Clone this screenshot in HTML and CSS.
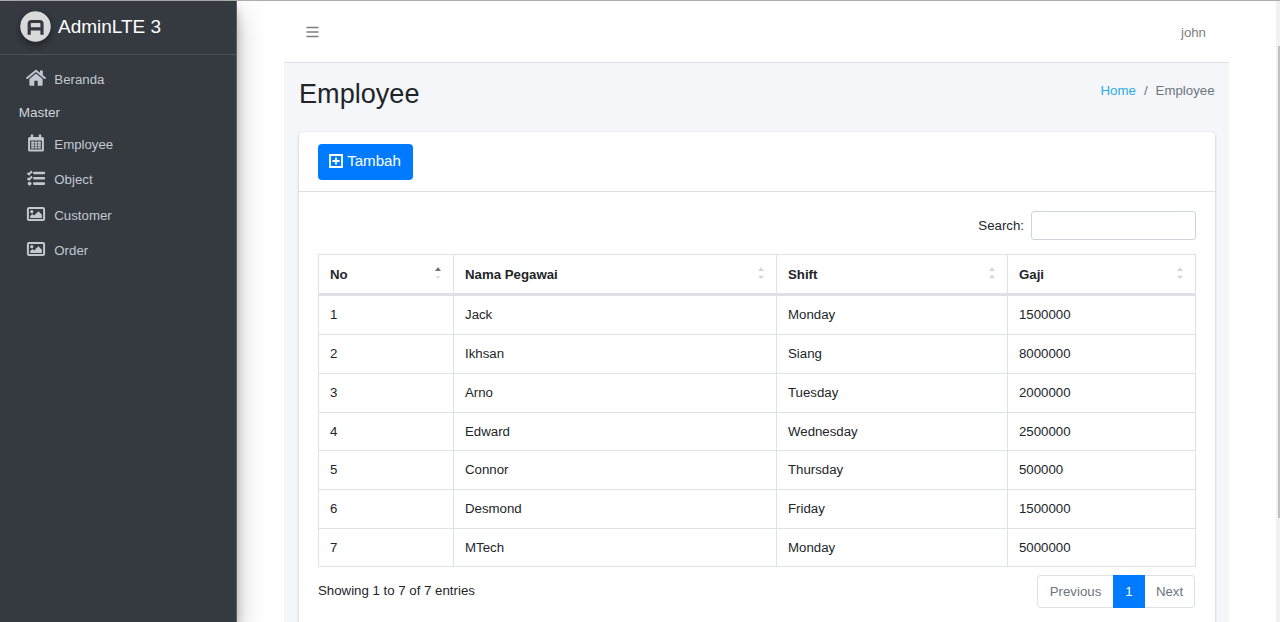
FILE: index.html
```html
<!DOCTYPE html>
<html lang="en">
<head>
<meta charset="utf-8">
<title>AdminLTE 3 | Employee</title>
<link rel="stylesheet" href="styles.css">
</head>
<body>
<div class="app">
  <aside class="sidebar">
    <a class="brand">
      <svg class="brand-logo" viewBox="0 0 31 31"><circle cx="15.500" cy="15.500" r="15.300" fill="#d8d9da"/><path d="M9.200 23.700V12.800Q9.200 10.500 11.500 10.500H19.700Q22 10.500 22 12.800V23.700M9.200 17.800H22" fill="none" stroke="#343a40" stroke-width="3.200"/></svg>
      <span class="brand-text">AdminLTE 3</span>
    </a>
    <nav class="menu">
      <a class="menu-item"><svg class="menu-icon" viewBox="0 0 20 18"><path d="M1.200 9 10 1.800 18.800 9" fill="none" stroke="currentColor" stroke-width="2" stroke-linecap="round"/><path d="M14 1.500h2.800v6L14 5zM10 4.400 16.600 10v6q0 .7-.7.7h-4.200v-4.900H8.300v4.900H4.100q-.7 0-.7-.7v-6z" fill="currentColor"/></svg><span>Beranda</span></a>
      <div class="menu-header">Master</div>
      <a class="menu-item"><svg class="menu-icon raised" viewBox="0 0 20 18"><path fill="currentColor" fill-rule="evenodd" d="M4.800.5h2.400V3h5.600V.5h2.400V3h1.100q1.600 0 1.600 1.600v11.300q0 1.600-1.600 1.600H3.700q-1.600 0-1.600-1.600V4.600Q2.100 3 3.700 3h1.100zM4.100 6.500v9h11.800v-9zM5.200 7.600h2.800v2.100H5.200zm3.400 0h2.800v2.100H8.600zm3.400 0h2.800v2.100H12zM5.200 10.200H8v2H5.200zm3.400 0h2.800v2H8.600zm3.400 0h2.800v2H12zM5.200 12.700H8v1.900H5.200zm3.400 0h2.800v1.900H8.600zm3.400 0h2.800v1.900H12z"/></svg><span>Employee</span></a>
      <a class="menu-item"><svg class="menu-icon raised" viewBox="0 0 20 18"><path d="M1.500 4.100 3 5.400 6 2.300M1.500 9.300 3 10.600 6 7.500" fill="none" stroke="currentColor" stroke-width="2"/><circle cx="3.600" cy="14.600" r="1.900" fill="currentColor"/><path d="M8.300 4h9.600M8.300 9.300h9.600M8.300 14.600h9.600" stroke="currentColor" stroke-width="2.600" stroke-linecap="round"/></svg><span>Object</span></a>
      <a class="menu-item"><svg class="menu-icon" viewBox="0 0 20 18"><rect x="1.900" y="3" width="16.200" height="12" rx="1.200" fill="none" stroke="currentColor" stroke-width="2"/><circle cx="5.800" cy="6.700" r="1.600" fill="currentColor"/><path d="M4.200 13v-1.900l2.200-2.100 1.700 1.600 4.300-4.300 3.500 3.500V13z" fill="currentColor"/></svg><span>Customer</span></a>
      <a class="menu-item"><svg class="menu-icon raised" viewBox="0 0 20 18"><rect x="1.900" y="3" width="16.200" height="12" rx="1.200" fill="none" stroke="currentColor" stroke-width="2"/><circle cx="5.800" cy="6.700" r="1.600" fill="currentColor"/><path d="M4.200 13v-1.900l2.200-2.100 1.700 1.600 4.300-4.300 3.500 3.500V13z" fill="currentColor"/></svg><span>Order</span></a>
    </nav>
  </aside>

  <main class="page">
    <header class="topbar">
      <svg class="toggle" viewBox="0 0 12 12"><path d="M0 1.500h12M0 6h12M0 10.500h12" stroke="#7f7f7f" stroke-width="1.700"/></svg>
      <span class="user">john</span>
    </header>
    <section class="content">
      <div class="content-head">
        <h1 class="title">Employee</h1>
        <div class="crumbs"><a class="crumb-link">Home</a><span>/</span><span>Employee</span></div>
      </div>
      <div class="card">
        <div class="card-header">
          <button class="btn-add"><svg class="btn-icon" viewBox="0 0 14 14"><path d="M1 1h12v12H1zM7 3.400v7.200M3.400 7h7.200" fill="none" stroke="#fff" stroke-width="1.800"/></svg>Tambah</button>
        </div>
        <div class="card-body">
          <label class="search">Search:<input class="search-input" type="text"></label>
          <table class="grid">
            <colgroup><col class="c-no"><col class="c-name"><col class="c-shift"><col class="c-pay"></colgroup>
            <thead>
              <tr>
                <th><div class="th">No<svg class="sort" viewBox="0 0 6 12"><path d="M0 4 3 0l3 4z" fill="#707377"/><path d="M.5 9h5L3 12z" fill="#dddfe1"/></svg></div></th>
                <th><div class="th">Nama Pegawai<svg class="sort" viewBox="0 0 6 12"><path d="M0 4 3 .3 6 4zM0 8.700h6L3 12z" fill="#d3d5d8"/></svg></div></th>
                <th><div class="th">Shift<svg class="sort" viewBox="0 0 6 12"><path d="M0 4 3 .3 6 4zM0 8.700h6L3 12z" fill="#d3d5d8"/></svg></div></th>
                <th><div class="th">Gaji<svg class="sort" viewBox="0 0 6 12"><path d="M0 4 3 .3 6 4zM0 8.700h6L3 12z" fill="#d3d5d8"/></svg></div></th>
              </tr>
            </thead>
            <tbody>
              <tr><td>1</td><td>Jack</td><td>Monday</td><td>1500000</td></tr>
              <tr><td>2</td><td>Ikhsan</td><td>Siang</td><td>8000000</td></tr>
              <tr><td>3</td><td>Arno</td><td>Tuesday</td><td>2000000</td></tr>
              <tr class="short"><td>4</td><td>Edward</td><td>Wednesday</td><td>2500000</td></tr>
              <tr><td>5</td><td>Connor</td><td>Thursday</td><td>500000</td></tr>
              <tr><td>6</td><td>Desmond</td><td>Friday</td><td>1500000</td></tr>
              <tr class="short"><td>7</td><td>MTech</td><td>Monday</td><td>5000000</td></tr>
            </tbody>
          </table>
          <div class="table-foot">
            <span class="info">Showing 1 to 7 of 7 entries</span>
            <div class="pager"><a class="pg prev">Previous</a><a class="pg current">1</a><a class="pg next">Next</a></div>
          </div>
        </div>
      </div>
    </section>
  </main>
  <div class="scrollbar"><div class="scroll-thumb"></div></div>
</div>
</body>
</html>
```
FILE: styles.css
```css
* { box-sizing: border-box; }
body {
  margin: 0;
  height: 622px;
  overflow: hidden;
  background: #fff;
  color: #212529;
  font-family: "Liberation Sans", Arial, sans-serif;
  font-size: 13.25px;
  line-height: 20px;
}
.app {
  display: flex;
  height: 622px;
  border-top: 1px solid #adafb1;
}

/* Sidebar */
.sidebar {
  flex: none;
  width: 237px;
  background: #343a40;
  border-right: 1px solid #5c6166;
  box-shadow: 0 13px 26px rgba(0, 0, 0, .25), 0 9px 9px rgba(0, 0, 0, .22);
  color: #c2c7d0;
}
.brand {
  display: flex;
  align-items: center;
  gap: 7px;
  height: 54px;
  padding: 0 0 3px 20px;
  border-bottom: 1px solid #4b545c;
}
.brand-logo {
  width: 31px;
  height: 31px;
  border-radius: 50%;
  box-shadow: 0 3px 6px rgba(0, 0, 0, .18), 0 3px 6px rgba(0, 0, 0, .23);
}
.brand-text { color: #fff; font-size: 19px; line-height: 28px; padding-top: 2px; }
.menu { padding-top: 7px; }
.menu-item {
  display: flex;
  align-items: center;
  gap: 8.300px;
  height: 35.400px;
  padding-left: 26px;
}
.menu-icon { width: 20px; height: 18px; margin-top: -3px; }
.menu-icon.raised { margin-top: -5px; }
.menu-header { height: 30px; padding: 6px 0 0 18.700px; color: #d0d4db; font-size: 13.500px; }

/* Page */
.page { flex: none; width: 945px; margin-left: 47px; display: flex; flex-direction: column; }
.topbar {
  display: flex;
  justify-content: space-between;
  align-items: center;
  flex: none;
  height: 62px;
  padding: 0 23px 0 22px;
  border-bottom: 1px solid #dee2e6;
}
.toggle { width: 13px; height: 12px; }
.user { color: #808080; padding-top: 2px; }
.content { flex: 1; padding: 0 14px 0 15px; background: #f4f6f9; }
.content-head { display: flex; justify-content: space-between; height: 69px; }
.title { margin: 14px 0 0; font-size: 27.100px; line-height: 34px; font-weight: 400; }
.crumbs { display: flex; gap: 8px; padding: 18px .5px 0 0; color: #6c757d; }
.crumb-link { color: #29abe8; }

.card {
  height: 520px;
  background: #fff;
  border-radius: 4px;
  box-shadow: 0 0 1px rgba(0, 0, 0, .125), 0 1px 3px rgba(0, 0, 0, .2);
}
.card-header {
  height: 60px;
  padding: 12px 19px 0;
  border-bottom: 1px solid #dfdfdf;
}
.btn-add {
  display: flex;
  align-items: center;
  justify-content: center;
  gap: 4px;
  width: 95px;
  height: 36px;
  padding: 0 1px 2px 0;
  border: 0;
  border-radius: 4px;
  background: #007bff;
  color: #fff;
  font: 15.100px/22px "Liberation Sans", Arial, sans-serif;
}
.btn-icon { width: 14px; height: 14px; }
.card-body { padding: 19px 19px 0; }
.search { display: flex; justify-content: flex-end; align-items: center; gap: 7px; height: 30px; }
.search-input {
  width: 165px;
  height: 29px;
  margin-bottom: 1px;
  border: 1px solid #ced4da;
  border-radius: 3px;
  background: #fff;
}

/* Data table */
.grid {
  width: 878px;
  margin-top: 13px;
  table-layout: fixed;
  border-collapse: separate;
  border-spacing: 0;
  border-right: 1px solid #dee2e6;
}
.c-no { width: 135px; }
.c-name { width: 323px; }
.c-shift { width: 231px; }
.grid th, .grid td {
  padding: 0 0 0 11px;
  border-left: 1px solid #dee2e6;
  border-bottom: 1px solid #dee2e6;
  text-align: left;
  vertical-align: middle;
}
.grid th {
  height: 42px;
  padding-top: 1px;
  border-top: 1px solid #dee2e6;
  border-bottom: 3px solid #dee2e6;
}
.grid td { height: 39px; }
.grid .short td { height: 38px; padding-top: 1px; }
.th { display: flex; justify-content: space-between; padding-right: 12px; }
.sort { width: 6px; height: 12px; margin-top: 2px; }

.table-foot { display: flex; justify-content: space-between; padding: 8px 1px 0 0; }
.info { padding-top: 6px; }
.pager { display: flex; height: 33px; }
.pg {
  display: flex;
  align-items: center;
  justify-content: center;
  border: 1px solid #dee2e6;
  color: #6c757d;
}
.prev { width: 76px; border-right: 0; border-radius: 4px 0 0 4px; }
.current { width: 32px; background: #007bff; border-color: #007bff; color: #fff; }
.next { width: 50px; border-left: 0; border-radius: 0 4px 4px 0; }

/* Window scrollbar */
.scrollbar { flex: none; width: 4px; margin-left: auto; padding: 45px 0 0 2px; background: #f1f1f1; }
.scroll-thumb { height: 472px; background: #c1c1c1; }
```
